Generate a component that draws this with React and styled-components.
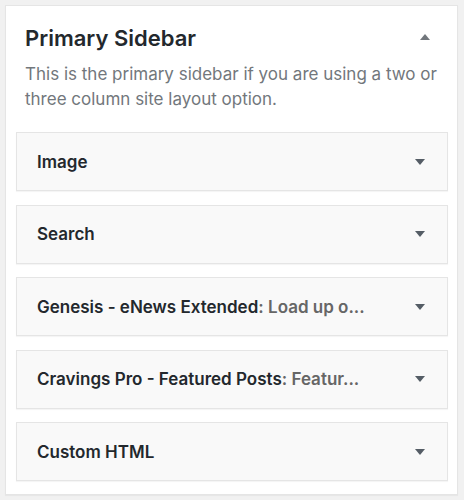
import React from "react";
import styled, { createGlobalStyle } from "styled-components";

const Global = createGlobalStyle`
  html, body { margin: 0; padding: 0; background: #f1f1f1; }
  body { font-family: Inter, "Open Sans", "Liberation Sans", sans-serif; -webkit-font-smoothing: antialiased; }
`;

const Page = styled.div`
  padding: 5px 6px 5px 5px;
`;

const Panel = styled.section`
  background: #fff;
  border: 1px solid #e5e5e5;
  box-shadow: 0 1px 1px rgba(0, 0, 0, 0.04);
  padding: 0 9px 13px 10px;
`;

const Header = styled.div`
  display: flex;
  align-items: flex-start;
  justify-content: space-between;
  padding: 17px 18px 0 9px;
`;

const Title = styled.h2`
  margin: 0;
  font-size: 22px;
  font-weight: 600;
  line-height: 30px;
  color: #23282d;
`;

const Desc = styled.p`
  margin: 9px 0 20px 9px;
  font-size: 17px;
  line-height: 25px;
  color: #72777c;
`;

const Arrow = styled.span`
  width: 0;
  height: 0;
  border-left: 5px solid transparent;
  border-right: 5px solid transparent;
  ${(p) =>
    p.$up
      ? `border-bottom: 6px solid #72777c; margin-top: 11px;`
      : `border-top: 6px solid #555d66;`}
`;

const List = styled.div`
  display: flex;
  flex-direction: column;
  gap: 13.5px;
`;

const Widget = styled.div`
  height: 57px;
  display: flex;
  align-items: center;
  justify-content: space-between;
  padding: 0 22px 0 20px;
  background: #f9f9f9;
  border: 1px solid #e5e5e5;
  box-shadow: 0 1px 1px rgba(0, 0, 0, 0.04);
`;

const WTitle = styled.span`
  font-size: 17px;
  font-weight: 600;
  color: #23282d;
  white-space: nowrap;
`;

const Sub = styled.span`
  color: #666;
`;

const widgets = [
  { t: "Image" },
  { t: "Search" },
  { t: "Genesis - eNews Extended", s: "Load up o..." },
  { t: "Cravings Pro - Featured Posts", s: "Featur..." },
  { t: "Custom HTML" },
];

export default function App() {
  return (
    <>
      <Global />
      <Page>
        <Panel>
          <Header>
            <Title>Primary Sidebar</Title>
            <Arrow $up />
          </Header>
          <Desc>
            This is the primary sidebar if you are using a two or three column site layout option.
          </Desc>
          <List>
            {widgets.map((w) => (
              <Widget key={w.t}>
                <WTitle>
                  {w.t}
                  {w.s && <Sub>: {w.s}</Sub>}
                </WTitle>
                <Arrow />
              </Widget>
            ))}
          </List>
        </Panel>
      </Page>
    </>
  );
}
